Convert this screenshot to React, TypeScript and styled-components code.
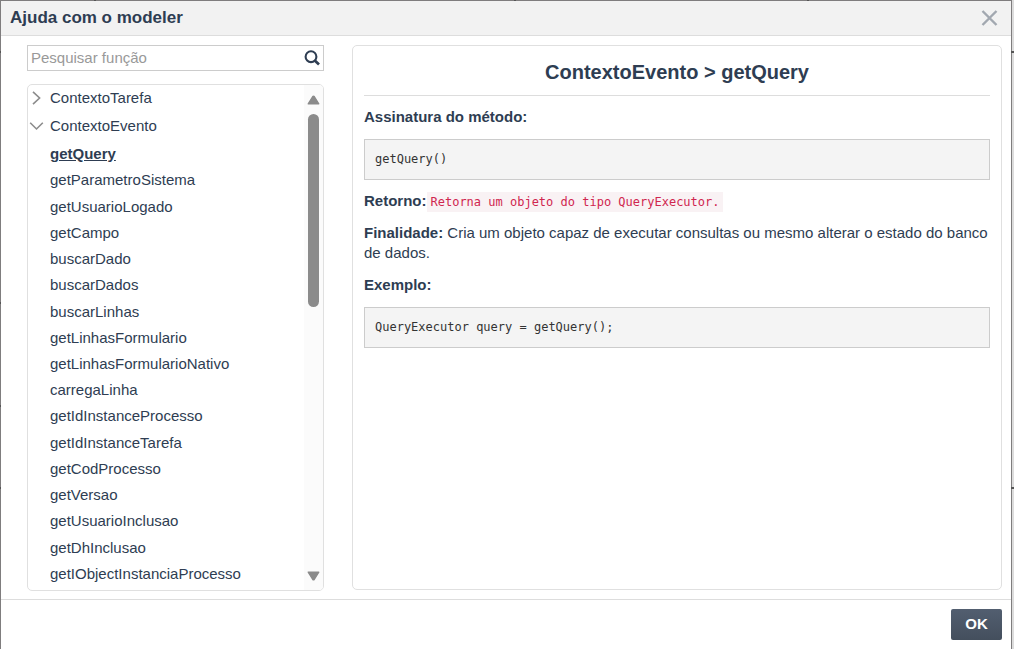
import React, { useState } from "react";
import styled, { createGlobalStyle, css } from "styled-components";

const GlobalStyle = createGlobalStyle`
  * { box-sizing: border-box; }
  body {
    margin: 0;
    color: #2e3d52;
    font-family: "Liberation Sans", Arial, sans-serif;
    font-size: 15px;
  }
  button, input { font: inherit; color: inherit; }
`;

const Backdrop = styled.div`
  min-height: 100vh;
  display: flex;
  padding: 1px 3px 0 1px;
  background:
    linear-gradient(#555, #555) 94px 0 / 2px 1px no-repeat,
    linear-gradient(#555, #555) 514px 0 / 2px 1px no-repeat,
    linear-gradient(#555, #555) 807px 0 / 2px 1px no-repeat,
    linear-gradient(#555, #555) 0 51px / 100% 2px no-repeat,
    linear-gradient(#555, #555) 0 302px / 1px 2px no-repeat,
    linear-gradient(#555, #555) 0 405px / 1px 2px no-repeat,
    linear-gradient(#555, #555) 0 487px / 100% 2px no-repeat,
    linear-gradient(#7f7d7e, #7f7d7e) 0 0 / calc(100% - 2px) 100% no-repeat,
    #dcdcdc;
`;

const Dialog = styled.section`
  flex: 1;
  min-width: 0;
  display: flex;
  flex-direction: column;
  background: #fff;
`;

const Header = styled.header`
  display: flex;
  align-items: center;
  justify-content: space-between;
  height: 35px;
  padding: 0 13px 1px 9px;
  background: #f2f2f2;
  border-bottom: 1px solid #ddd;
`;

const Title = styled.h1`
  margin: 0;
  font-size: 17px;
  line-height: 20px;
`;

const CloseButton = styled.button`
  display: flex;
  padding: 0;
  border: 0;
  background: none;
  cursor: pointer;
`;

const Body = styled.div`
  flex: 1;
  display: flex;
  gap: 28px;
  padding: 9px 9px 8px 26px;
`;

const Sidebar = styled.aside`
  flex: 0 0 297px;
  display: flex;
  flex-direction: column;
  gap: 13px;
`;

const SearchBox = styled.form`
  display: flex;
  height: 26px;
  padding: 0 3px;
  border: 1px solid #ccc;
`;

const SearchInput = styled.input`
  flex: 1;
  min-width: 0;
  padding: 0 0 2px;
  border: 0;
  outline: 0;
  background: none;
  &::placeholder { color: #999; opacity: 1; }
`;

const SearchButton = styled(CloseButton)`
  align-items: center;
`;

const TreePanel = styled.div`
  flex: 1;
  display: flex;
  border: 1px solid #e0e0e0;
  border-radius: 5px;
  overflow: hidden;
`;

const Tree = styled.ul`
  flex: 1;
  display: flex;
  flex-direction: column;
  margin: 0;
  padding: 0 0 3px;
  list-style: none;
`;

const Branch = styled.li<{ $open?: boolean }>`
  display: flex;
  flex-direction: column;
  ${(p) => p.$open && css`flex: 1;`}
`;

const Leaves = styled.ul`
  flex: 1;
  display: flex;
  flex-direction: column;
  margin: 0;
  padding: 0;
  list-style: none;
`;

const Leaf = styled.li`
  flex: 1;
  display: flex;
  min-height: 26px;
`;

const rowButton = css`
  display: flex;
  align-items: center;
  width: 100%;
  border: 0;
  background: none;
  text-align: left;
  line-height: 20px;
  cursor: pointer;
`;

const BranchButton = styled.button`
  ${rowButton}
  height: 28px;
  gap: 6px;
  padding: 0 0 2px 1px;
`;

const LeafButton = styled.button<{ $active: boolean }>`
  ${rowButton}
  padding: 0 0 0 22px;
  ${(p) => p.$active && css`
    font-weight: bold;
    text-decoration: underline;
  `}
`;

const ScrollRail = styled.div`
  display: flex;
  flex-direction: column;
  align-items: center;
  width: 19px;
  padding: 10px 0 9px;
  background: #fbfbfb;
`;

const ScrollTrack = styled.div`
  flex: 1;
  width: 11px;
  margin: 9px 0;
`;

const ScrollThumb = styled.div`
  height: 43%;
  border-radius: 6px;
  background: #8b8b8b;
`;

const Detail = styled.article`
  flex: 1;
  min-width: 0;
  margin-bottom: 1px;
  padding: 10px 11px;
  border: 1px solid #e0e0e0;
  border-radius: 5px;
`;

const DetailTitle = styled.h2`
  margin: 0 0 11px;
  padding: 4px 0 11px;
  border-bottom: 1px solid #ddd;
  font-size: 20px;
  line-height: 24px;
  text-align: center;
`;

const Paragraph = styled.p`
  margin: 0 0 12px;
  line-height: 20px;
`;

const CodeBlock = styled.pre`
  margin: 0 0 11px;
  padding: 9px 10px;
  border: 1px solid #ccc;
  background: #f4f4f4;
  color: #333;
  font-family: "DejaVu Sans Mono", monospace;
  font-size: 12px;
  line-height: 21px;
`;

const InlineCode = styled.code`
  padding: 3px 4px;
  background: #f9f2f4;
  color: #d0264f;
  font-family: "DejaVu Sans Mono", monospace;
  font-size: 12px;
  line-height: 14px;
`;

const Footer = styled.footer`
  display: flex;
  justify-content: flex-end;
  padding: 9px;
  border-top: 1px solid #ddd;
`;

const OkButton = styled.button`
  width: 51px;
  height: 31px;
  padding: 0 0 2px;
  border: 0;
  border-radius: 2px;
  background: linear-gradient(#525e70, #444f5d);
  color: #fff;
  font-weight: bold;
  cursor: pointer;
`;

const Chevron = ({ open }: { open?: boolean }) => (
  <svg width="15" height="16" viewBox="0 0 15 16" fill="none" stroke="#8c8c8c" strokeWidth="1.6" aria-hidden="true">
    <path d={open ? "M1.2 4.8 7.5 11 13.8 4.8" : "M4 1.8 10.6 8 4 14.2"} />
  </svg>
);

const ScrollArrow = ({ down }: { down?: boolean }) => (
  <svg width="13" height="10" viewBox="0 0 13 10" fill="#8b8b8b" stroke="#8b8b8b" strokeWidth="1.5" strokeLinejoin="round" aria-hidden="true">
    <path d={down ? "M1.3 1.2H11.7L7.2 8.4Q6.5 9.2 5.8 8.4Z" : "M1.3 8.8H11.7L7.2 1.6Q6.5 .8 5.8 1.6Z"} />
  </svg>
);

const functions = [
  "getQuery",
  "getParametroSistema",
  "getUsuarioLogado",
  "getCampo",
  "buscarDado",
  "buscarDados",
  "buscarLinhas",
  "getLinhasFormulario",
  "getLinhasFormularioNativo",
  "carregaLinha",
  "getIdInstanceProcesso",
  "getIdInstanceTarefa",
  "getCodProcesso",
  "getVersao",
  "getUsuarioInclusao",
  "getDhInclusao",
  "getIObjectInstanciaProcesso",
];

export default function App() {
  const [selected, setSelected] = useState("getQuery");

  return (
    <>
      <GlobalStyle />
      <Backdrop>
        <Dialog role="dialog" aria-labelledby="dialog-title">
          <Header>
            <Title id="dialog-title">Ajuda com o modeler</Title>
            <CloseButton type="button" aria-label="Fechar">
              <svg width="17" height="16" viewBox="0 0 17 16" fill="none" stroke="#a2a8b0" strokeWidth="2.4">
                <path d="M1.5 1 15.5 15M15.5 1 1.5 15" />
              </svg>
            </CloseButton>
          </Header>
          <Body>
            <Sidebar>
              <SearchBox role="search" onSubmit={(e) => e.preventDefault()}>
                <SearchInput aria-label="Pesquisar função" placeholder="Pesquisar função" />
                <SearchButton type="submit" aria-label="Pesquisar">
                  <svg width="16" height="16" viewBox="0 0 16 16" fill="none" stroke="#2e3d52">
                    <circle cx="7" cy="6.7" r="5.4" strokeWidth="2.1" />
                    <path d="M10.8 10.6 15 14.6" strokeWidth="2.7" />
                  </svg>
                </SearchButton>
              </SearchBox>
              <TreePanel>
                <Tree>
                  <Branch>
                    <BranchButton type="button" aria-expanded="false">
                      <Chevron />
                      ContextoTarefa
                    </BranchButton>
                  </Branch>
                  <Branch $open>
                    <BranchButton type="button" aria-expanded="true">
                      <Chevron open />
                      ContextoEvento
                    </BranchButton>
                    <Leaves>
                      {functions.map((name) => (
                        <Leaf key={name}>
                          <LeafButton type="button" $active={name === selected} onClick={() => setSelected(name)}>
                            {name}
                          </LeafButton>
                        </Leaf>
                      ))}
                    </Leaves>
                  </Branch>
                </Tree>
                <ScrollRail aria-hidden="true">
                  <ScrollArrow />
                  <ScrollTrack>
                    <ScrollThumb />
                  </ScrollTrack>
                  <ScrollArrow down />
                </ScrollRail>
              </TreePanel>
            </Sidebar>
            <Detail>
              <DetailTitle>ContextoEvento &gt; getQuery</DetailTitle>
              <Paragraph><strong>Assinatura do método:</strong></Paragraph>
              <CodeBlock>getQuery()</CodeBlock>
              <Paragraph>
                <strong>Retorno:</strong>
                <InlineCode>Retorna um objeto do tipo QueryExecutor.</InlineCode>
              </Paragraph>
              <Paragraph>
                <strong>Finalidade:</strong> Cria um objeto capaz de executar consultas ou mesmo alterar o estado do banco de dados.
              </Paragraph>
              <Paragraph><strong>Exemplo:</strong></Paragraph>
              <CodeBlock>QueryExecutor query = getQuery();</CodeBlock>
            </Detail>
          </Body>
          <Footer>
            <OkButton type="button">OK</OkButton>
          </Footer>
        </Dialog>
      </Backdrop>
    </>
  );
}
